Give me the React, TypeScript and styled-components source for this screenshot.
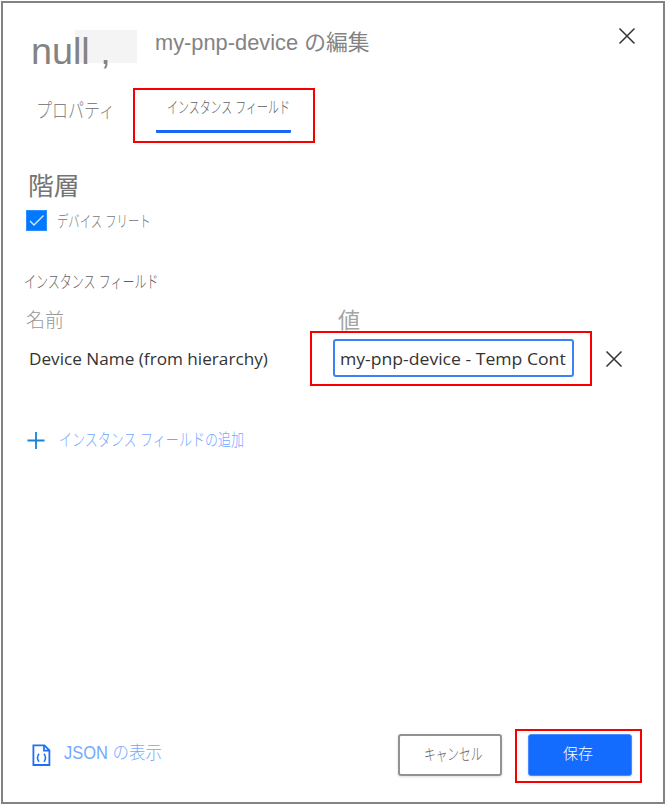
import React from "react";
import styled, { createGlobalStyle } from "styled-components";

const GlobalStyle = createGlobalStyle`
  * { box-sizing: border-box; }
  body { margin: 0; background: #fff; font-family: "Liberation Sans", "Noto Sans CJK JP", sans-serif; }
`;

const Dialog = styled.div`
  width: 664px;
  height: 803px;
  margin: 1px;
  border: 2px solid #838383;
  display: flex;
  flex-direction: column;
  background: #fff;
`;

const Label = styled.span<{ $size: number; $color: string; $stretch?: number; $weight?: number }>`
  display: block;
  flex: none;
  white-space: pre;
  font-size: ${(p) => p.$size}px;
  line-height: 24px;
  font-weight: ${(p) => p.$weight ?? 300};
  color: ${(p) => p.$color};
  transform: scaleX(${(p) => p.$stretch ?? 1});
  transform-origin: 0 50%;
`;

const LatinLabel = styled.span<{ $stretch: number }>`
  display: block;
  white-space: pre;
  font-family: "Open Sans", "Noto Sans", sans-serif;
  font-size: 17px;
  line-height: 24px;
  color: #333;
  transform: scaleX(${(p) => p.$stretch});
  transform-origin: 0 50%;
`;

const Header = styled.header`
  display: flex;
  height: 85px;
  padding: 23px 26px 0 28px;
`;

const Avatar = styled.div`
  width: 106px;
  height: 33px;
  margin-top: 4px;
  background: linear-gradient(#f4f4f4, #f4f4f4) 44px 0 / 62px 33px no-repeat;
  padding: 10px 0 0 0;
`;

const Title = styled.h1`
  margin: 5px auto 0 18px;
`;

const IconButton = styled.button`
  display: flex;
  flex: none;
  width: 20px;
  height: 20px;
  padding: 0;
  border: 0;
  background: none;
`;

const Tabs = styled.nav`
  display: flex;
  height: 56px;
`;

const Tab = styled.div`
  width: 130px;
  padding: 11px 0 0 33px;
`;

const Callout = styled.div<{ $w: number; $h: number }>`
  flex: none;
  display: flex;
  width: ${(p) => p.$w}px;
  height: ${(p) => p.$h}px;
  border: 2px solid #f90000;
`;

const ActiveTab = styled.div`
  width: 135px;
  height: 43px;
  margin-left: 21px;
  padding: 6px 0 0 11px;
  border-bottom: 3px solid #1a66f5;
  border-radius: 1px;
`;

const SectionTitle = styled.h2`
  margin: 30px 0 0 25px;
  height: 34px;
`;

const CheckRow = styled.div`
  display: flex;
  gap: 10px;
  height: 24px;
  margin-left: 23px;
  padding-top: 2px;
`;

const Checkbox = styled.span`
  display: flex;
  width: 21px;
  height: 21px;
  background: #0078ff;
  border: 1px solid #2f8eff;
`;

const FieldsTitle = styled.h3`
  margin: 39px 0 0 21px;
  height: 38px;
`;

const Columns = styled.div`
  display: grid;
  grid-template-columns: 312px 1fr;
  height: 22px;
  padding-left: 23px;
`;

const FieldRow = styled.div`
  display: grid;
  grid-template-columns: 281px 282px 1fr;
  align-items: center;
  height: 55px;
  padding-left: 26px;
`;

const ValueInput = styled.div`
  width: 241px;
  height: 38px;
  margin: 6px 0 0 21px;
  padding: 6px 0 0 4.5px;
  border: 2px solid #3b82f8;
  border-radius: 3px;
  overflow: hidden;
`;

const AddRow = styled.div`
  display: flex;
  gap: 13px;
  margin: 43px 0 0 23px;
`;

const Footer = styled.footer`
  display: flex;
  margin-top: auto;
  height: 75px;
  padding: 2px 21px 0 28px;
`;

const JsonLink = styled.div`
  display: flex;
  gap: 13px;
  width: 367px;
  padding-top: 12px;
`;

const Button = styled.div<{ $primary?: boolean }>`
  display: flex;
  width: 104px;
  height: 42px;
  padding: ${(p) => (p.$primary ? "7px 0 0 34px" : "7px 0 0 24px")};
  border: ${(p) => (p.$primary ? "1px solid #478bff" : "2px solid #929292")};
  border-radius: 3px;
  background: ${(p) => (p.$primary ? "#146cff" : "#fff")};
  box-shadow: 0 1px 3px #0002;
`;

const CancelSlot = styled.div`
  padding-top: 5px;
  width: 117px;
`;

const SaveSlot = styled.div`
  padding: 3px 0 0 11px;
`;

const RemoveSlot = styled.div`
  padding-left: 12px;
`;

const Cross = () => (
  <svg width="20" height="20" viewBox="0 0 20 20" fill="none" stroke="#333" strokeWidth="1.5">
    <path d="M2.5 2.5l15 15M17.5 2.5l-15 15" />
  </svg>
);

export default function App() {
  return (
    <>
      <GlobalStyle />
      <Dialog>
        <Header>
          <Avatar><Label $size={37} $color="#838383" $stretch={1.02}>null ,</Label></Avatar>
          <Title><Label $size={21.4} $color="#838383" $weight={400} $stretch={1.02}>my-pnp-device の編集</Label></Title>
          <IconButton aria-label="閉じる"><Cross /></IconButton>
        </Header>
        <Tabs>
          <Tab><Label $size={20} $color="#858585" $stretch={0.8}>プロパティ</Label></Tab>
          <Callout $w={182} $h={55}>
            <ActiveTab><Label $size={16} $color="#606060" $stretch={0.685}>インスタンス フィールド</Label></ActiveTab>
          </Callout>
        </Tabs>
        <SectionTitle><Label $size={25} $color="#747474" $weight={400} $stretch={1.03}>階層</Label></SectionTitle>
        <CheckRow>
          <Checkbox>
            <svg width="19" height="19" viewBox="0 0 19 19" fill="none" stroke="#d8eaff" strokeWidth="1.4">
              <path d="M3 10l4 4 9.5-9.5" />
            </svg>
          </Checkbox>
          <Label $size={16} $color="#777" $stretch={0.71}>デバイス フリート</Label>
        </CheckRow>
        <FieldsTitle><Label $size={17} $color="#606060" $stretch={0.705}>インスタンス フィールド</Label></FieldsTitle>
        <Columns>
          <Label $size={19} $color="#999">名前</Label>
          <Label $size={22} $color="#a5a5a5" $weight={400}>値</Label>
        </Columns>
        <FieldRow>
          <LatinLabel $stretch={1.01}>Device Name (from hierarchy)</LatinLabel>
          <Callout $w={282} $h={55}>
            <ValueInput><LatinLabel $stretch={1.035}>my-pnp-device - Temp Cont</LatinLabel></ValueInput>
          </Callout>
          <RemoveSlot><IconButton aria-label="削除"><Cross /></IconButton></RemoveSlot>
        </FieldRow>
        <AddRow>
          <svg width="20" height="24" viewBox="0 0 20 24" fill="none" stroke="#1683d8" strokeWidth="1.8">
            <path d="M1.5 11.5h17M10 3v17" />
          </svg>
          <Label $size={17} $color="#73a8ff" $stretch={0.765}>インスタンス フィールドの追加</Label>
        </AddRow>
        <Footer>
          <JsonLink>
            <svg width="20" height="28" viewBox="0 0 20 28" fill="none" stroke="#1f70f8" strokeWidth="1.8">
              <path d="M2.4 4.4h11l5 5v14.6h-16zM13 4.4v5.2h5.4" />
              <path d="M8 12.7q-3 4 0 8M13 12.7q3 4 0 8" strokeWidth="1.5" />
            </svg>
            <Label $size={18} $color="#73a8ff" $stretch={0.915}>JSON の表示</Label>
          </JsonLink>
          <CancelSlot>
            <Button><Label $size={16} $color="#666" $stretch={0.73}>キャンセル</Label></Button>
          </CancelSlot>
          <Callout $w={127} $h={54}>
            <SaveSlot>
              <Button $primary><Label $size={15} $color="#fff">保存</Label></Button>
            </SaveSlot>
          </Callout>
        </Footer>
      </Dialog>
    </>
  );
}
